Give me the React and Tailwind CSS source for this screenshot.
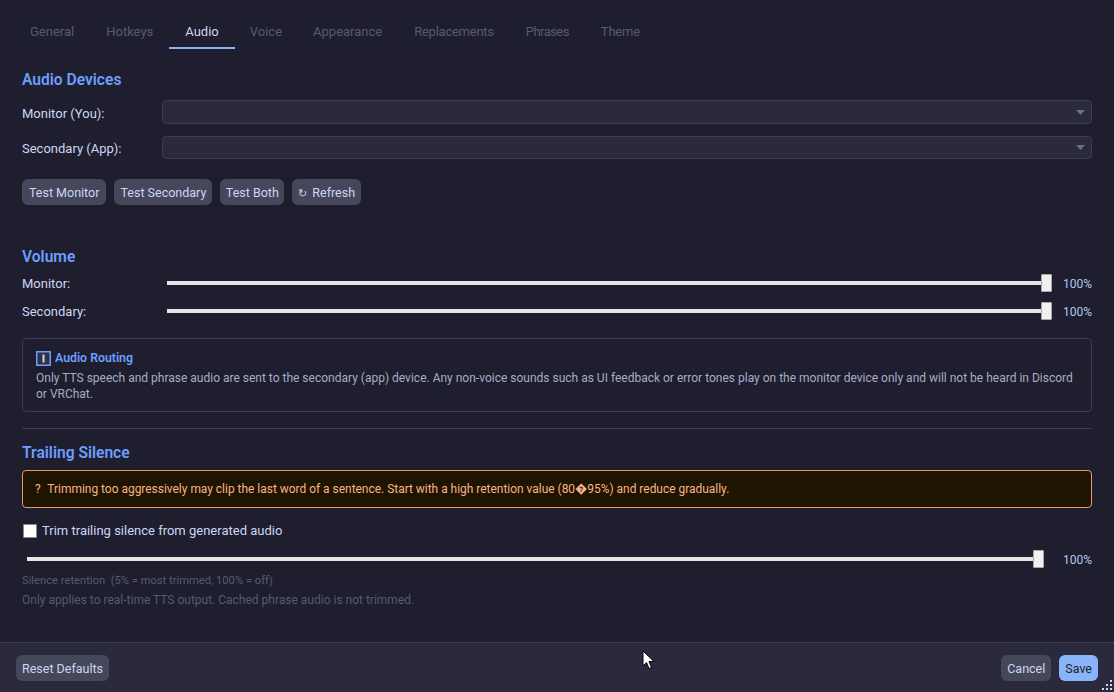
// per-tab nudges so the widths line up with the original UI font
const tabs = [
  { name: 'General', cls: 'px-[16px]' },
  { name: 'Hotkeys', cls: 'px-[16px]' },
  { name: 'Audio', cls: 'px-[16px]' },
  { name: 'Voice', cls: 'px-[15px]' },
  { name: 'Appearance', cls: 'px-[16px]' },
  { name: 'Replacements', cls: 'px-[16px] tracking-[-0.25px]' },
  { name: 'Phrases', cls: 'px-[16px] tracking-[-0.55px]' },
  { name: 'Theme', cls: 'px-[16px] tracking-[-0.2px]' },
];

const Heading = ({ className, children }) => (
  <h2 className={`text-[15.6px] leading-[18px] font-semibold text-[#6c9eff] ${className}`}>{children}</h2>
);

const Button = ({ children, pad = 'px-[6px]', className = 'bg-[#45475a] text-[#cdd6f4]' }) => (
  <button type="button" className={`h-[26px] pt-[1px] rounded-[6px] text-[12.5px] leading-[16px] ${pad} ${className}`}>
    {children}
  </button>
);

const DeviceRow = ({ label, className, boxClass, labelClass }) => (
  <div className={`flex items-center ${className}`}>
    <span className={`w-[140px] text-[13px] text-[#cdd6f4] ${labelClass}`}>{label}</span>
    <div className={`flex-1 flex items-center justify-end pr-[6px] rounded-[4px] bg-[#2a2a3c] border border-[#3c3c50] ${boxClass}`}>
      <svg width="9" height="5" viewBox="0 0 9 5"><path d="M0 0h9L4.500 5z" fill="#6c7086" /></svg>
    </div>
  </div>
);

const Slider = ({ label, trackClass, className }) => (
  <div className={`flex items-center h-[18px] ${className}`}>
    {label && <span className="w-[145px] pt-[1px] text-[13px] text-[#cdd6f4]">{label}</span>}
    <div className={`relative flex-1 h-[4px] bg-[#e6e6e6] ${trackClass}`}>
      <div className="absolute right-[-6px] top-[-7px] w-[11px] h-[18px] bg-[#f0f0f0] border border-[#a8a8a8] rounded-[1px]" />
    </div>
    <span className="w-[46px] pt-[2px] text-right text-[12px] text-[#b4c6f0]">100%</span>
  </div>
);

export default function App() {
  return (
    <div className="relative h-[692px] w-[1114px] overflow-hidden flex flex-col bg-[#1e1e2e] font-['Roboto',sans-serif]">
      <div className="flex-1 px-[22px]">
        <div className="flex h-[34px] mt-[15px] ml-[-8px]">
          {tabs.map((tab) => (
            <div
              key={tab.name}
              className={`h-[34px] pt-[8px] text-[13px] leading-[17px] ${tab.cls} ${
                tab.name === 'Audio' ? 'text-[#cdd6f4] border-b-2 border-[#89b4fa]' : 'text-[#585b70]'
              }`}
            >
              {tab.name}
            </div>
          ))}
        </div>

        <Heading className="mt-[22px]">Audio Devices</Heading>
        <DeviceRow label="Monitor (You):" className="mt-[11px]" boxClass="h-[24px]" labelClass="pt-[3px]" />
        <DeviceRow label="Secondary (App):" className="mt-[12px]" boxClass="h-[23px]" labelClass="pt-[2px]" />
        <div className="flex gap-[8px] mt-[20px]">
          <Button pad="px-[7px]">Test Monitor</Button>
          <Button>Test Secondary</Button>
          <Button pad="px-[5.500px]">Test Both</Button>
          <Button><span className="text-[11px] leading-none mr-[5px]">↻</span>Refresh</Button>
        </div>

        <Heading className="mt-[43px]">Volume</Heading>
        <Slider label="Monitor:" className="mt-[8px]" />
        <Slider label="Secondary:" className="mt-[10px]" />

        <div className="mt-[18px] h-[74px] rounded-[4px] border border-[#3c3c50] px-[13px] pt-[11px]">
          <div className="flex items-center gap-[4px] text-[12.3px] leading-[16px] font-semibold text-[#6c9eff]">
            <svg width="15" height="15" viewBox="0 0 15 15">
              <rect x="0.750" y="0.750" width="13.500" height="13.500" fill="#313244" stroke="#6c9eff" strokeWidth="1.500" />
              <rect x="6.500" y="3.500" width="2" height="8" fill="#cdd6f4" />
            </svg>
            Audio Routing
          </div>
          <p className="text-[12px] leading-[16px] text-[#a6adc8] mt-[4px]">
            Only TTS speech and phrase audio are sent to the secondary (app) device. Any non-voice sounds such as UI feedback or error tones play on the monitor device only and will not be heard in Discord or VRChat.
          </p>
        </div>

        <div className="mt-[16px] h-px bg-[#3c3c50]" />

        <Heading className="mt-[15px]">Trailing Silence</Heading>
        <div className="mt-[8px] h-[38px] flex items-center pt-[2px] px-[12px] rounded-[4px] border border-[#e59c6a] bg-[#1e1400] text-[11.95px] text-[#fab387] whitespace-pre">
          <span className="mr-[1px]">?</span>
          {'  Trimming too aggressively may clip the last word of a sentence. Start with a high retention value (80\uFFFD95%) and reduce gradually.'}
        </div>

        <label className="mt-[15px] flex items-center h-[16px] pl-[1px] gap-[5px] text-[13px] text-[#cdd6f4]">
          <input type="checkbox" readOnly className="appearance-none w-[14px] h-[14px] bg-white border border-[#8a8a8a] rounded-[1px]" />
          Trim trailing silence from generated audio
        </label>

        <Slider className="mt-[11px] pl-[5px]" trackClass="mr-[8px]" />

        <p className="mt-[6px] text-[11.2px] leading-[14px] text-[#585b70] whitespace-pre">Silence retention  (5% = most trimmed, 100% = off)</p>
        <p className="mt-[4px] text-[12px] leading-[16px] text-[#585b70]">Only applies to real-time TTS output. Cached phrase audio is not trimmed.</p>
      </div>

      <div className="h-[50px] flex items-center justify-between pl-[16px] pr-[16px] pt-[1px] bg-[#2a2a3c] border-t border-[#3c3c50]">
        <Button>Reset Defaults</Button>
        <div className="flex gap-[8px]">
          <Button>Cancel</Button>
          <Button className="bg-[#89b4fa] text-[#1e1e2e]">Save</Button>
        </div>
      </div>

      <svg className="absolute left-[642px] top-[650px]" width="13" height="20" viewBox="0 0 13 20">
        <path d="M1 1v15l3.500-3.500 2.500 6 2.500-1-2.500-6h5z" fill="#fff" stroke="#000" />
      </svg>

      <svg className="absolute right-[1px] bottom-[1px]" width="11" height="11" viewBox="0 0 11 11" fill="#cdd6f4">
        <rect x="8" y="0" width="2" height="2" />
        <rect x="4" y="4" width="2" height="2" />
        <rect x="8" y="4" width="2" height="2" />
        <rect x="0" y="8" width="2" height="2" />
        <rect x="4" y="8" width="2" height="2" />
        <rect x="8" y="8" width="2" height="2" />
      </svg>
    </div>
  );
}
